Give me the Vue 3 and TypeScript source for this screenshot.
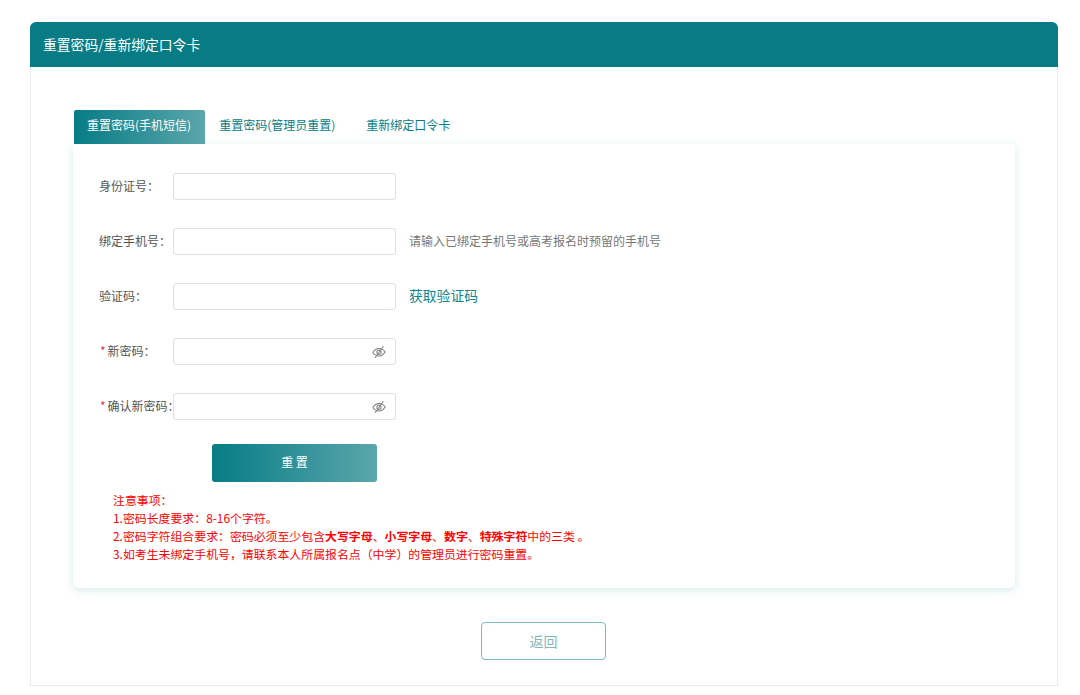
<script setup lang="ts">
interface Field {
  label: string
  required?: boolean
  password?: boolean
  hint?: string
  link?: string
}

const tabs = ['重置密码(手机短信)', '重置密码(管理员重置)', '重新绑定口令卡']

const fields: Field[] = [
  { label: '身份证号：' },
  { label: '绑定手机号：', hint: '请输入已绑定手机号或高考报名时预留的手机号' },
  { label: '验证码：', link: '获取验证码' },
  { label: '新密码：', required: true, password: true },
  { label: '确认新密码：', required: true, password: true },
]
</script>

<template>
  <div class="page">
    <section class="panel">
      <header class="panel-head">重置密码/重新绑定口令卡</header>
      <div class="panel-body">
        <div class="tabs">
          <div v-for="(tab, i) in tabs" :key="tab" class="tab" :class="{ active: i === 0 }">{{ tab }}</div>
        </div>
        <div class="card">
          <div v-for="f in fields" :key="f.label" class="row">
            <label class="label">
              <i v-if="f.required" class="star">*</i>{{ f.label }}
            </label>
            <div class="input">
              <svg v-if="f.password" class="eye" viewBox="0 0 16 16" fill="none" stroke="#808080" stroke-width="1.200">
                <path d="M1 8.500c1.800-3 4-4.500 7-4.500s5.200 1.500 7 4c-1.800 3-4 4.500-7 4.500s-5.200-1.500-7-4z" />
                <circle cx="8" cy="8.200" r="2.400" />
                <path d="M3.500 14.500l9.500-13" />
              </svg>
            </div>
            <span v-if="f.hint" class="hint">{{ f.hint }}</span>
            <a v-if="f.link" class="link">{{ f.link }}</a>
          </div>
          <button class="submit" type="button">重 置</button>
          <div class="notes">
            <p>注意事项：</p>
            <p>1.密码长度要求：8-16个字符。</p>
            <p>2.密码字符组合要求：密码必须至少包含<b>大写字母</b>、<b>小写字母</b>、<b>数字</b>、<b>特殊字符</b>中的三类 。</p>
            <p>3.如考生未绑定手机号，请联系本人所属报名点（中学）的管理员进行密码重置。</p>
          </div>
        </div>
        <div class="foot">
          <button class="back" type="button">返回</button>
        </div>
      </div>
    </section>
  </div>
</template>

<style>
html,
body {
  margin: 0;
  background: #fff;
}
</style>

<style scoped>
.page {
  height: 695px;
  box-sizing: border-box;
  padding: 22px 22px 0 30px;
  font-family: "Noto Sans CJK SC", "Liberation Sans", sans-serif;
  overflow: hidden;
}
.panel {
  height: 664px;
  box-sizing: border-box;
  border: 1px solid #e8eaec;
  border-top: 0;
  border-radius: 6px 6px 0 0;
}
.panel-head {
  height: 45px;
  margin: 0 -1px;
  padding-left: 13px;
  background: #077c85;
  border-radius: 6px 6px 0 0;
  color: #fff;
  font-size: 13.800px;
  line-height: 44px;
}
.panel-body {
  padding: 43px 42px 0;
}
.tabs {
  display: flex;
  height: 34px;
  margin-left: 1px;
}
.tab {
  padding: 0 15px;
  color: #077c85;
  font-size: 12px;
  line-height: 30px;
}
.tab:nth-child(2) {
  padding: 0 16px 0 14px;
}
.tab.active {
  padding: 0 14px 0 13px;
  border-radius: 2px 2px 0 0;
  background: linear-gradient(90deg, #077c85, #5aa6ab);
  color: #fff;
}
.card {
  height: 444px;
  box-sizing: border-box;
  padding: 29px 0 0 26px;
  border-radius: 0 0 6px 6px;
  background: #fff;
  box-shadow: 0 2px 10px rgba(7, 124, 133, 0.16);
}
.row {
  display: flex;
  align-items: center;
  height: 27px;
  margin-bottom: 28px;
}
.label {
  flex: none;
  width: 74px;
  margin-bottom: 3px;
  color: #555;
  font-size: 12px;
  white-space: nowrap;
}
.star {
  margin: 0 2px 0 1px;
  color: #e5334b;
  font-style: normal;
}
.input {
  display: flex;
  align-items: center;
  justify-content: flex-end;
  position: relative;
  width: 223px;
  height: 27px;
  box-sizing: border-box;
  padding-right: 9px;
  border: 1px solid #dcdfe6;
  border-radius: 3px;
  background: #fff;
}
.eye {
  width: 14px;
  height: 14px;
}
.hint {
  margin: 0 0 3px 13px;
  color: #777;
  font-size: 12px;
}
.link {
  margin: 0 0 3px 13px;
  color: #0f858c;
  font-size: 13.800px;
}
.submit {
  display: block;
  width: 165px;
  height: 38px;
  margin: -4px 0 0 113px;
  padding: 0 0 3px;
  border: 0;
  border-radius: 3px;
  background: linear-gradient(90deg, #077c85, #5aa6ab);
  color: #fff;
  font-family: inherit;
  font-size: 12px;
}
.notes {
  margin: 9px 0 0 14px;
  color: #f00;
  font-size: 11.900px;
  line-height: 18px;
}
.notes p {
  margin: 0;
}
.notes b {
  font-weight: 700;
}
.foot {
  display: flex;
  justify-content: center;
  padding: 34px 1px 0 0;
}
.back {
  width: 125px;
  height: 38px;
  padding: 0;
  border: 1px solid #7fb9be;
  border-radius: 4px;
  background: #fff;
  color: #7fb9be;
  font-family: inherit;
  font-size: 14px;
}
</style>
